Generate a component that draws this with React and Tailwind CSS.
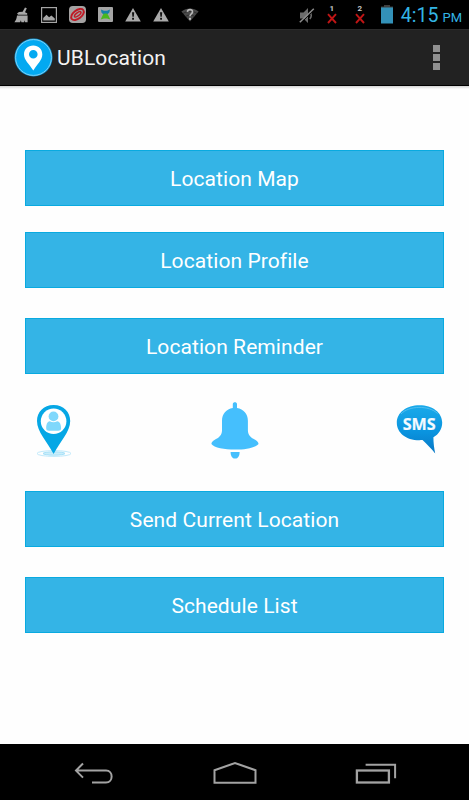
import React from 'react';

const WarningIcon = () => (
  <svg width="16" height="14" viewBox="0 0 16 14" className="flex-shrink-0">
    <path d="M8 0L15.8 13.6H0.2Z" fill="#a9a9a9" />
    <path d="M7 4.2h2.2l-.4 4.6H7.4z" fill="#111" />
    <rect x="7.1" y="9.8" width="1.9" height="1.9" fill="#111" />
  </svg>
);

const SimIcon = ({ label }) => (
  <div className="flex flex-col items-center w-[10px] pt-[5px] flex-shrink-0">
    <span className="text-[8px] leading-[8px] font-bold text-[#c4c4c4]">{label}</span>
    <svg width="10" height="11" viewBox="0 0 10 11">
      <path d="M1 1.2L9 10M9 1.2L1 10" stroke="#c01515" strokeWidth="1.9" />
    </svg>
  </div>
);

const StatusBar = () => (
  <div className="flex justify-between h-[29px] bg-black pl-[14px] pr-[7px]">
    <div className="flex items-center">
      {/* Cleaner */}
      <svg width="15" height="16" viewBox="0 0 15 16" className="mr-3">
        <path d="M11 .4l1.800.8-1.800 4 2.200 1v1.600H4.200L3 6.500l2-1.400 3.600-.3z" fill="#a8a8a8" />
        <path d="M3 8.600h10.600v6.600h-2.400l-.6-2-.4 2H7.400l-.5-2-.8 2H.4c1.500-1.500 2.200-3.500 2.600-6.600z" fill="#a8a8a8" />
      </svg>
      {/* Gallery */}
      <svg width="16" height="16" viewBox="0 0 16 16" className="mr-3">
        <rect x=".6" y=".6" width="14.800" height="14.800" fill="none" stroke="#a6a6a6" strokeWidth="1.200" />
        <path d="M2.200 13.600V11l3.300-3.200 2.600 2.400 2.300-1.600 3.400 2.900v2.100z" fill="#a6a6a6" />
      </svg>
      {/* Swirl app */}
      <svg width="17" height="17" viewBox="0 0 17 17" className="mr-3">
        <rect width="17" height="17" rx="3.800" fill="#a4a2a2" />
        <g transform="rotate(-38 8.500 8.500)" fill="none" stroke="#c01824">
          <ellipse cx="8.500" cy="8.500" rx="7.300" ry="4.200" strokeWidth="1.900" />
          <ellipse cx="8.800" cy="8.500" rx="3.900" ry="1.500" strokeWidth="1.500" />
        </g>
      </svg>
      {/* Transfer app */}
      <svg width="15" height="15" viewBox="0 0 15 15" className="mr-3">
        <rect width="15" height="15" rx="1" fill="#a5a5a5" />
        <path d="M3 2.500l3 1.200h3l3-1.200-.7 3-2.600 2.500H6L3.400 5.500z" fill="#1780a8" />
        <path d="M6 6.500h3l1.300 1.700 2 4.300-3.300-1H6l-3.300 1 2-4.300z" fill="#49b81d" />
      </svg>
      <WarningIcon />
      <div className="w-3" />
      <WarningIcon />
      {/* Unknown wifi */}
      <svg width="18" height="14" viewBox="0 0 18 14" className="ml-3">
        <path d="M.4 3.500C5.500-.5 12.500-.5 17.600 3.500L9 13.600z" fill="#4a4a4a" />
        <path d="M2 5.500c4.500-3 9.500-3 14 0M4.500 8.500c3-2 6-2 9 0" fill="none" stroke="#222" strokeWidth=".7" />
        <path d="M6.400 3.800C6.700.8 11.600.8 11.500 3.900c0 2-2.500 2-2.500 4.300" fill="none" stroke="#b8b8b8" strokeWidth="1.700" />
        <rect x="8" y="9.800" width="2" height="2" fill="#b8b8b8" />
      </svg>
    </div>

    <div className="flex">
      {/* Muted */}
      <svg width="16" height="17" viewBox="0 0 16 17" className="mt-[7px] mr-3">
        <path d="M1 5.500h3.500L9 1v15l-4.500-4.500H1z" fill="#6c6c6c" />
        <path d="M10.800 5c1.700 2 1.700 5 0 7" fill="none" stroke="#6c6c6c" strokeWidth="1.500" />
        <path d="M1.600 16.200L15.600 2.500" stroke="#000" strokeWidth="1" />
        <path d="M.8 15.300L14.800 1.800" stroke="#8b8b8b" strokeWidth="1.500" />
      </svg>
      <SimIcon label="1" />
      <div className="w-[18px]" />
      <SimIcon label="2" />
      {/* Battery */}
      <svg width="12" height="19" viewBox="0 0 12 19" className="mt-[5px] ml-4 mr-2">
        <path d="M3 0h6v1.500h3V3H0V1.500h3z" fill="#3f3f3f" />
        <rect y="2.500" width="12" height="16" fill="#3391b8" />
      </svg>
      <div className="flex items-baseline text-[#33b5e5] whitespace-nowrap">
        <span className="text-[19.500px] leading-[32px]">4:15</span>
        <span className="text-[13px] ml-1">PM</span>
      </div>
    </div>
  </div>
);

const Header = () => (
  <header className="flex items-center justify-between h-[57px] bg-[#222] border-b border-black pl-[14px] pr-[29px] border-t border-t-[#2b2b2b]">
    <div className="flex items-center">
      <svg width="39" height="39" viewBox="0 0 39 39">
        <circle cx="19.500" cy="19.500" r="19" fill="#0f9bdc" />
        <circle cx="19.500" cy="19.500" r="17.900" fill="#03a9f1" stroke="#8bd5f6" strokeWidth=".9" />
        <path
          fillRule="evenodd"
          d="M19.300 7.500c-5.500 0-9.300 3.800-9.300 8.900 0 5.500 5.300 9.600 9.300 16.100 4-6.500 9-10.600 9-16.100 0-5.100-3.700-8.900-9-8.900zm0 4.500a4.300 4.300 0 1 1 0 8.600 4.300 4.300 0 0 1 0-8.600z"
          fill="#fff"
        />
      </svg>
      <h1 className="ml-1 pt-[2px] text-[21px] tracking-[0.1px] text-[#f3f3f3]">UBLocation</h1>
    </div>
    <button className="flex flex-col gap-[2px]">
      <span className="block w-[7px] h-[7px] bg-[#909090]" />
      <span className="block w-[7px] h-[7px] bg-[#909090]" />
      <span className="block w-[7px] h-[7px] bg-[#909090]" />
    </button>
  </header>
);

const MenuButton = ({ children, className = '' }) => (
  <button
    className={`block w-full h-14 bg-[#34b4e6] border border-[#09aae0] text-white text-[21px] leading-none tracking-[0.08px] pt-[2px] ${className}`}
  >
    {children}
  </button>
);

const ProfileIcon = () => (
  <svg width="36" height="54" viewBox="0 0 36 54">
    <ellipse cx="18" cy="49.500" rx="17" ry="2.900" fill="none" stroke="#b9e7f9" strokeWidth=".9" />
    <ellipse cx="18" cy="49.500" rx="11" ry="1.700" fill="#c9edfa" stroke="#8fd9f6" strokeWidth=".7" />
    <path d="M17.600 1C7.500 1 1 8 1 17c0 10.500 9.500 20 16.600 33C24.700 37 34.200 27.500 34.200 17c0-9-6.500-16-16.600-16z" fill="#06a7e5" />
    <circle cx="17.600" cy="17.200" r="12.800" fill="#fff" />
    <circle cx="17.500" cy="12.400" r="4.900" fill="#80d8fc" />
    <path d="M10.200 24.500c0-4 .8-6.700 3.600-7.300 2.500 1.500 5 1.500 7.400 0 2.800.6 3.900 3.300 3.900 7.300 0 1.500-1.300 2.200-2.800 2.200h-9.500c-1.500 0-2.600-.7-2.600-2.200z" fill="#80d8fc" />
  </svg>
);

const BellIcon = () => (
  <svg width="48" height="57" viewBox="0 0 48 57" fill="#45bffd">
    <path d="M21.800 6V2.200C21.800-.3 26 -.3 26 2.200V6c6.500 1 10.900 6 10.900 12.800v9.400c0 5 3 7.300 7.600 9.700 1.500.8 3 2.200 3 4C45 45.500 34.500 47.600 24 47.600S3 45.500.4 41.900c0-1.800 1.500-3.200 3-4C8 35.500 11 33.200 11 28.200v-9.400C11 12 15.300 7 21.800 6z" />
    <path d="M19.600 50h9c0 4-1.500 6.600-4.500 6.600s-4.500-2.600-4.500-6.600z" />
  </svg>
);

const SmsIcon = () => (
  <svg width="48" height="50" viewBox="0 0 48 50">
    <defs>
      <linearGradient id="sms" x1="0" y1="0" x2="0" y2="1">
        <stop offset="0" stopColor="#1aaaea" />
        <stop offset=".55" stopColor="#0a94df" />
        <stop offset="1" stopColor="#0877c4" />
      </linearGradient>
    </defs>
    <path d="M23.500.2C36.500.2 46.200 7.500 46.200 17.500c0 6.500-3.500 11.800-8.800 14.800 0 5.500.7 11 1.800 16.200-3.500-4.500-8.200-9-12.700-13.400C11 36.300.8 28.500.8 17.500.8 7.500 10.500.2 23.500.2z" fill="url(#sms)" />
    <path d="M5 9C12.500.6 33 0 41.500 8.500" fill="none" stroke="#5dc3f1" strokeWidth=".8" />
    <text x="23.200" y="25.200" textAnchor="middle" fontFamily="Open Sans, sans-serif" fontWeight="700" fontSize="16" textLength="33" lengthAdjust="spacingAndGlyphs" fill="#f3faff" stroke="#f3faff" strokeWidth=".2">SMS</text>
  </svg>
);

const NavBar = () => (
  <nav className="h-14 bg-black flex items-center justify-between pt-[2px] pl-[74px] pr-[72px]">
    <button>
      <svg width="40" height="24" viewBox="0 0 40 24" fill="none" stroke="#a3a3a3" strokeWidth="2">
        <path d="M9 2.500L2 9.600l7 7M2.500 9.600H32c7.500 0 7.500 11.900 0 11.900H18" />
      </svg>
    </button>
    <button>
      <svg width="44" height="24" viewBox="0 0 44 24" fill="none" stroke="#a3a3a3" strokeWidth="2">
        <path d="M1.500 9.200L22 2l20.500 7.200v12.600h-41z" />
      </svg>
    </button>
    <button>
      <svg width="42" height="24" viewBox="0 0 42 24" fill="none" stroke="#a3a3a3">
        <rect x="1.900" y="9.500" width="32" height="12" strokeWidth="2.300" />
        <path d="M10.600 3.700h29.500v13.600" strokeWidth="2" />
      </svg>
    </button>
  </nav>
);

const App = () => {
  return (
    <div className="flex flex-col w-full h-screen overflow-hidden bg-[#fefefe] font-[Roboto,sans-serif]">
      <StatusBar />
      <Header />
      <div className="h-[3px] bg-gradient-to-b from-[#d2d2d2] to-[#fefefe]" />

      <main className="flex-1 px-[25px] pt-[61px]">
        <MenuButton className="mb-[26px]">Location Map</MenuButton>
        <MenuButton className="mb-[30px]">Location Profile</MenuButton>
        <MenuButton>Location Reminder</MenuButton>

        {/* Shortcuts */}
        <div className="flex justify-between items-start h-[117px] pt-7 pl-[11px]">
          <div className="pt-[2px]">
            <ProfileIcon />
          </div>
          <div className="pl-[1px]">
            <BellIcon />
          </div>
          <div className="pt-[3px]">
            <SmsIcon />
          </div>
        </div>

        <MenuButton className="mb-[30px]">Send Current Location</MenuButton>
        <MenuButton>Schedule List</MenuButton>
      </main>

      <NavBar />
    </div>
  );
};

export default App;
